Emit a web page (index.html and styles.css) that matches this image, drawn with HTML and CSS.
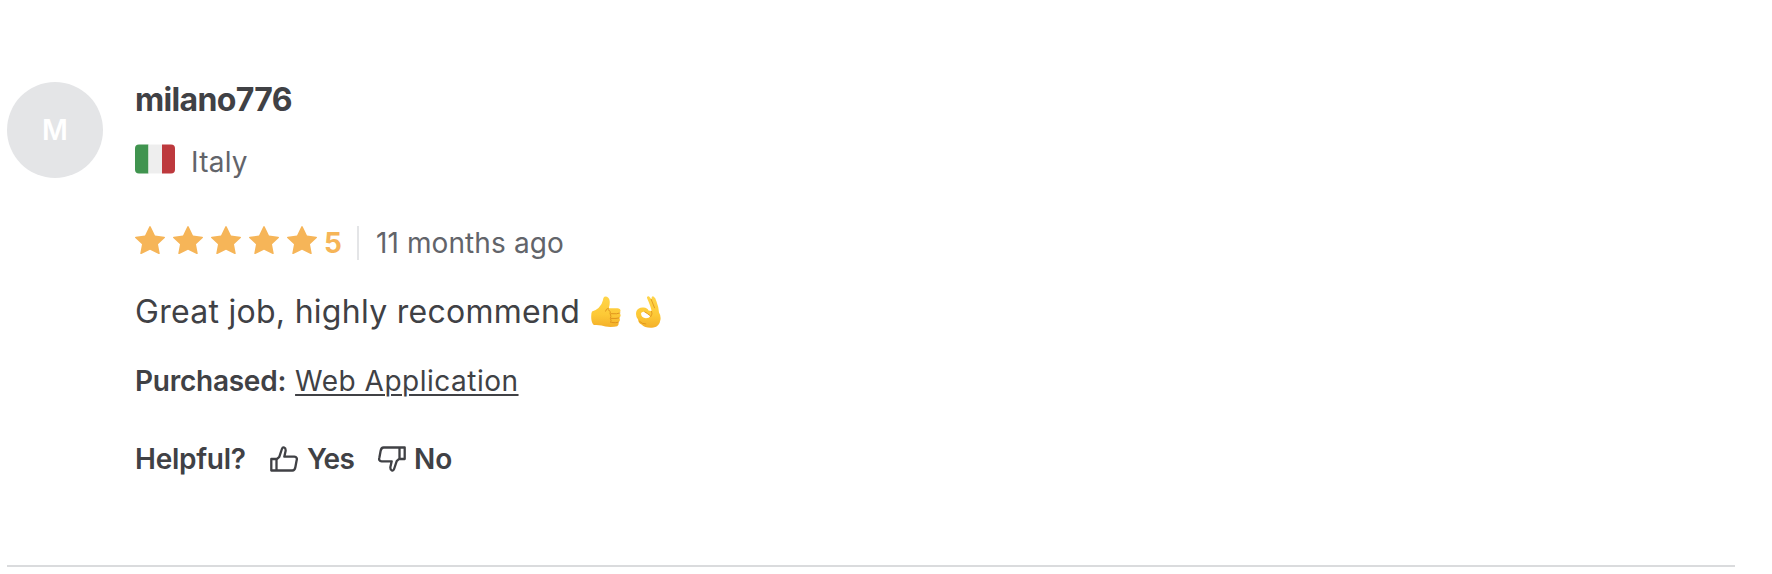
FILE: index.html
```
<!DOCTYPE html>
<html lang="en">
<head>
<meta charset="utf-8">
<title>Review</title>
<link rel="stylesheet" href="styles.css">
</head>
<body>
<svg class="defs" aria-hidden="true">
  <defs>
    <symbol id="star" viewBox="0 0 30 28"><path d="M14.200.7q.8-1.200 1.600 0l4.200 8.800 9.200 1.200q1.300.3.500 1.300l-6.700 6.300 1.700 9q0 1.200-1.100.7L15 23.700l-8.600 4.300q-1.100.5-1.100-.7l1.700-9L.3 12q-.8-1 .5-1.300L10 9.500z" fill="#f6b558"/></symbol>
    <linearGradient id="skin" x1="0" y1="0" x2="0" y2="1"><stop offset="0" stop-color="#ffd54a"/><stop offset=".6" stop-color="#fdc936"/><stop offset="1" stop-color="#f4b02a"/></linearGradient>
  </defs>
</svg>
<article class="review">
  <div class="avatar">M</div>
  <div class="content">
    <div class="name"><span>milano776</span></div>
    <div class="country">
      <svg class="flag" viewBox="0 0 40 30"><path d="M4 .5h9.500v29H4q-4 0-4-4v-21q0-4 4-4" fill="#40944f"/><path d="M13.500.5H27v29H13.500z" fill="#eee"/><path d="M27 .5h9q4 0 4 4v21q0 4-4 4h-9z" fill="#bd393d"/></svg>
      <span>Italy</span>
    </div>
    <div class="rating">
      <div class="stars">
        <svg><use href="#star"/></svg><svg><use href="#star"/></svg><svg><use href="#star"/></svg><svg><use href="#star"/></svg><svg><use href="#star"/></svg>
      </div>
      <b class="score">5</b>
      <time class="date">11 months ago</time>
    </div>
    <div class="comment">
      <span>Great job, highly recommend</span>
      <svg class="thumb" viewBox="0 0 30 32"><path d="M1 15.500q4-1.500 6.500-3.600Q11 9 12 4q.3-3.500 2.400-3.600 3.600 0 4.300 4.500.3 4-.9 7.300h8.600q3.200.2 3.100 2.600 0 1.500-1.300 2.200 1.500.8 1.400 2.500-.1 1.700-1.700 2.300 1.200.9 1 2.400-.2 1.600-1.800 2 .8.8.5 2.100-.6 2.500-4.500 2.500-8.100.6-12.600-1.300-4-.8-7.500-.4-2.200-1.400-2.700-6.100-.4-5.500.7-7.500z" fill="url(#skin)"/><path d="M17.800 12.200q-3 .5-3.300 3.300M29.300 16.900q-3 1.300-9.500.8M28.700 21.800q-3 1-8.800.6M27.800 26.200q-3 .8-7.500.3M17 13.500q3.500 2 2.100 4.200 1.600 2.800.2 4.700 1.500 2.200.2 4.300" fill="none" stroke="#dc8e1a" stroke-width=".9"/></svg>
      <svg class="ok" viewBox="0 0 25 32"><path fill-rule="evenodd" d="M11 1q1.500-1.500 3 .5l1.500 2q-.2-4 2-3 2 1 3 5 2 5 2.500 11 2 3 1.500 7-1 7-7 8-8 1-12-3-3-1-3.500-5-3-4-1.500-8.500 2-4 7-3.500 4 .3 5 3l3 .5q-.5-4-4.500-13zM5 17.200q.7-1.800 3.300-1.500 2.900 1.800 6.200 4.300-1.500 2.300-4.500 2.300-5-.8-5-5.100z" fill="url(#skin)"/><path d="M15 3l3.700 9.200M3.200 25q2.500 3 7 3M8.300 15.700q3 1.600 6.200 4.300M15.500 15q1.500 3-1 6" fill="none" stroke="#dc8e1a" stroke-width=".8"/></svg>
    </div>
    <div class="purchase"><b>Purchased:</b><a class="product">Web Application</a></div>
    <div class="helpful">
      <b class="question">Helpful?</b>
      <svg class="vote up" viewBox="0 0 28 26"><path d="M1.300 13h5.200v11.500H1.300zM6.500 13.500l2.800-2.600L11.900 3q.7-2 2.300-1.500 1.700.6 1.400 3.500l-1.300 5.700h10q3.400.4 2.300 3.800l-1.200 6.500q-.6 3.500-3 3.500H6.500"/></svg>
      <b class="yes">Yes</b>
      <svg class="vote down" viewBox="0 0 28 26"><path d="M26.700 13h-5.200V1.500h5.200zM21.500 12.500l-2.800 2.600-2.600 7.900q-.7 2-2.300 1.500-1.700-.6-1.400-3.500l1.300-5.700h-10q-3.400-.4-2.300-3.800l1.200-6.500q.6-3.500 3-3.500h15.900"/></svg>
      <b class="no">No</b>
    </div>
  </div>
</article>
</body>
</html>
```
FILE: styles.css
```
body { margin: 0; padding: 79px 37px 0 7px; background: #fff; color: #404145; font-family: Inter, sans-serif; font-size: 28px; line-height: 40px; }
b { font-weight: 600; }
.defs { position: absolute; width: 0; height: 0; }
.review { display: flex; gap: 32px; height: 486px; border-bottom: 2px solid #dadbdd; }
.avatar { flex: none; width: 96px; height: 96px; margin-top: 3px; border-radius: 50%; background: #e4e5e7; color: #fff; font-weight: 600; line-height: 96px; text-align: center; }
.content { display: flex; flex-direction: column; white-space: nowrap; }
.content > div { display: flex; align-items: center; height: 40px; }
.content > .name { padding-top: 1px; font-size: 32px; font-weight: 700; letter-spacing: -.65px; }
.content > .country { margin-top: 22px; gap: 16px; color: #62646a; letter-spacing: .25px; }
.flag { width: 40px; height: 30px; margin-top: -6px; }
.content > .rating { margin-top: 41px; }
.stars { display: flex; gap: 8px; margin-top: -6px; }
.stars svg { width: 30px; height: 28px; }
.score { width: 33px; margin-left: 7px; color: #f6b558; font-weight: 700; }
.date { padding-left: 17px; border-left: 2px solid #e4e5e7; line-height: 34px; color: #62646a; letter-spacing: .1px; }
.content > .comment { margin-top: 29px; font-size: 32px; letter-spacing: .28px; }
.thumb { width: 30px; height: 32px; margin-left: 11px; }
.ok { width: 25px; height: 32px; margin-left: 15px; }
.content > .purchase { margin-top: 29px; gap: 9px; }
.purchase b { letter-spacing: -.25px; }
.product { letter-spacing: .5px; text-decoration: underline; text-decoration-thickness: 2px; text-underline-offset: 3px; }
.content > .helpful { margin-top: 38px; }
.question { width: 135px; letter-spacing: -.25px; }
.vote { width: 28px; height: 26px; fill: none; stroke: #404145; stroke-width: 2.3; stroke-linejoin: round; }
.yes { width: 64px; margin-left: 9px; letter-spacing: -.6px; }
.yes + .vote { margin-left: 7px; }
.no { margin-left: 8px; }
```
